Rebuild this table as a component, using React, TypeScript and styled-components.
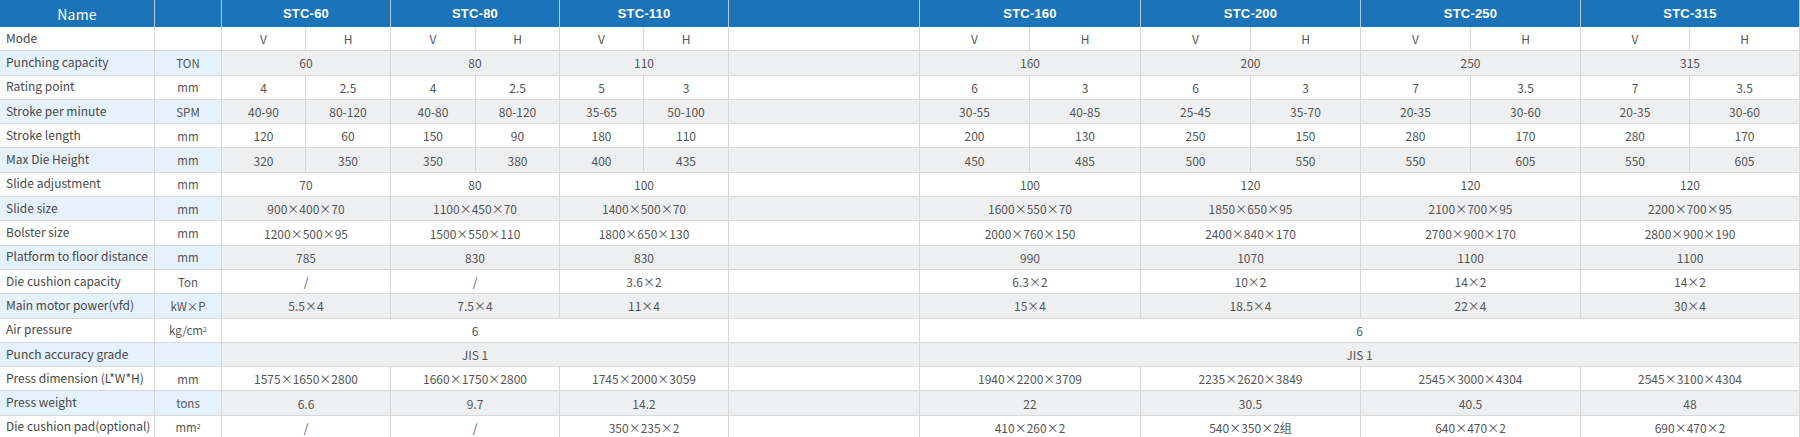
import React from 'react'
import styled, { createGlobalStyle } from 'styled-components'

const GlobalStyle = createGlobalStyle`
    html, body {
        margin: 0;
        padding: 0;
        background: #fff;
    }
    body {
        font-family: "Noto Sans CJK SC", "Noto Sans", sans-serif;
    }
`

// column widths measured off the reference
const COLS = [155, 67, 84, 85, 85, 84, 84, 85, 191, 110, 111, 110, 110, 110, 110, 109, 110]

const Table = styled.div`
    display: grid;
    grid-template-columns: ${COLS.map(w => w + 'px').join(' ')};
    grid-template-rows: 27px;
    grid-auto-rows: 24.3px;
    width: 1800px;
    overflow: hidden;
`

const HeadCell = styled.div<{ $span?: number; $name?: boolean }>`
    grid-column: span ${p => p.$span || 1};
    display: flex;
    align-items: center;
    justify-content: center;
    background: #1b74ba;
    color: #fff;
    border-right: 1px solid rgba(220, 235, 248, 0.75);
    box-sizing: border-box;
    font-family: ${p => p.$name ? '"Noto Sans CJK SC", "Noto Sans", sans-serif' : '"Liberation Sans", Arial, sans-serif'};
    font-weight: ${p => p.$name ? 400 : 700};
    font-size: ${p => p.$name ? '14px' : '13px'};
    letter-spacing: 0.2px;
`

const Cell = styled.div<{ $span?: number; $shade?: boolean }>`
    grid-column: span ${p => p.$span || 1};
    display: flex;
    align-items: center;
    justify-content: center;
    background: ${p => p.$shade ? '#eeeff0' : '#fff'};
    border-right: 1px solid #d8d8d8;
    border-bottom: 1px solid #d8d8d8;
    box-sizing: border-box;
    color: #555;
    font-size: 12px;
    white-space: nowrap;
`

const NameCell = styled(Cell)`
    justify-content: flex-start;
    padding: 0 0 3px 6px;
    background: ${p => p.$shade ? '#e5f1fb' : '#fff'};
    color: #484848;
`

const UnitCell = styled(Cell)`
    background: ${p => p.$shade ? '#e5f1fb' : '#fff'};
    font-size: 11.5px;
`

const Sup = styled.span`
    font-size: 7px;
    align-self: flex-start;
    margin-top: 5px;
`

type Val = string | [string, string]

interface Row {
    name: string
    unit: React.ReactNode
    values?: Val[]
    wide?: [string, string]
}

const MODELS = ['STC-60', 'STC-80', 'STC-110', 'STC-160', 'STC-200', 'STC-250', 'STC-315']
const VH: [string, string] = ['V', 'H']

const rows: Row[] = [
    { name: 'Mode', unit: '', values: [VH, VH, VH, VH, VH, VH, VH] },
    { name: 'Punching capacity', unit: 'TON', values: ['60', '80', '110', '160', '200', '250', '315'] },
    { name: 'Rating point', unit: 'mm', values: [['4', '2.5'], ['4', '2.5'], ['5', '3'], ['6', '3'], ['6', '3'], ['7', '3.5'], ['7', '3.5']] },
    { name: 'Stroke per minute', unit: 'SPM', values: [['40-90', '80-120'], ['40-80', '80-120'], ['35-65', '50-100'], ['30-55', '40-85'], ['25-45', '35-70'], ['20-35', '30-60'], ['20-35', '30-60']] },
    { name: 'Stroke length', unit: 'mm', values: [['120', '60'], ['150', '90'], ['180', '110'], ['200', '130'], ['250', '150'], ['280', '170'], ['280', '170']] },
    { name: 'Max Die Height', unit: 'mm', values: [['320', '350'], ['350', '380'], ['400', '435'], ['450', '485'], ['500', '550'], ['550', '605'], ['550', '605']] },
    { name: 'Slide adjustment', unit: 'mm', values: ['70', '80', '100', '100', '120', '120', '120'] },
    { name: 'Slide size', unit: 'mm', values: ['900×400×70', '1100×450×70', '1400×500×70', '1600×550×70', '1850×650×95', '2100×700×95', '2200×700×95'] },
    { name: 'Bolster size', unit: 'mm', values: ['1200×500×95', '1500×550×110', '1800×650×130', '2000×760×150', '2400×840×170', '2700×900×170', '2800×900×190'] },
    { name: 'Platform to floor distance', unit: 'mm', values: ['785', '830', '830', '990', '1070', '1100', '1100'] },
    { name: 'Die cushion capacity', unit: 'Ton', values: ['/', '/', '3.6×2', '6.3×2', '10×2', '14×2', '14×2'] },
    { name: 'Main motor power(vfd)', unit: 'kW×P', values: ['5.5×4', '7.5×4', '11×4', '15×4', '18.5×4', '22×4', '30×4'] },
    { name: 'Air pressure', unit: <>kg/cm<Sup>2</Sup></>, wide: ['6', '6'] },
    { name: 'Punch accuracy grade', unit: '', wide: ['JIS 1', 'JIS 1'] },
    { name: 'Press dimension (L*W*H)', unit: 'mm', values: ['1575×1650×2800', '1660×1750×2800', '1745×2000×3059', '1940×2200×3709', '2235×2620×3849', '2545×3000×4304', '2545×3100×4304'] },
    { name: 'Press weight', unit: 'tons', values: ['6.6', '9.7', '14.2', '22', '30.5', '40.5', '48'] },
    { name: 'Die cushion pad(optional)', unit: <>mm<Sup>2</Sup></>, values: ['/', '/', '350×235×2', '410×260×2', '540×350×2组', '640×470×2', '690×470×2'] },
]

function renderValues(row: Row, shade: boolean, key: number) {
    const out: React.ReactNode[] = []
    if (row.wide) {
        out.push(<Cell key="l" $span={6} $shade={shade}>{row.wide[0]}</Cell>)
        out.push(<Cell key="b" $shade={shade} />)
        out.push(<Cell key="r" $span={8} $shade={shade}>{row.wide[1]}</Cell>)
        return out
    }
    row.values!.forEach((v, i) => {
        if (i === 3) out.push(<Cell key={'blank' + key} $shade={shade} />)
        if (Array.isArray(v)) {
            out.push(<Cell key={i + 'v'} $shade={shade}>{v[0]}</Cell>)
            out.push(<Cell key={i + 'h'} $shade={shade}>{v[1]}</Cell>)
        } else {
            out.push(<Cell key={i} $span={2} $shade={shade}>{v}</Cell>)
        }
    })
    return out
}

export default function App() {
    return (
        <>
            <GlobalStyle />
            <Table>
                <HeadCell $name>Name</HeadCell>
                <HeadCell />
                {MODELS.slice(0, 3).map(m => <HeadCell key={m} $span={2}>{m}</HeadCell>)}
                <HeadCell />
                {MODELS.slice(3).map(m => <HeadCell key={m} $span={2}>{m}</HeadCell>)}

                {rows.map((row, idx) => {
                    const shade = idx % 2 === 1
                    return (
                        <React.Fragment key={row.name}>
                            <NameCell $shade={shade}>{row.name}</NameCell>
                            <UnitCell $shade={shade}>{row.unit}</UnitCell>
                            {renderValues(row, shade, idx)}
                        </React.Fragment>
                    )
                })}
            </Table>
        </>
    )
}
